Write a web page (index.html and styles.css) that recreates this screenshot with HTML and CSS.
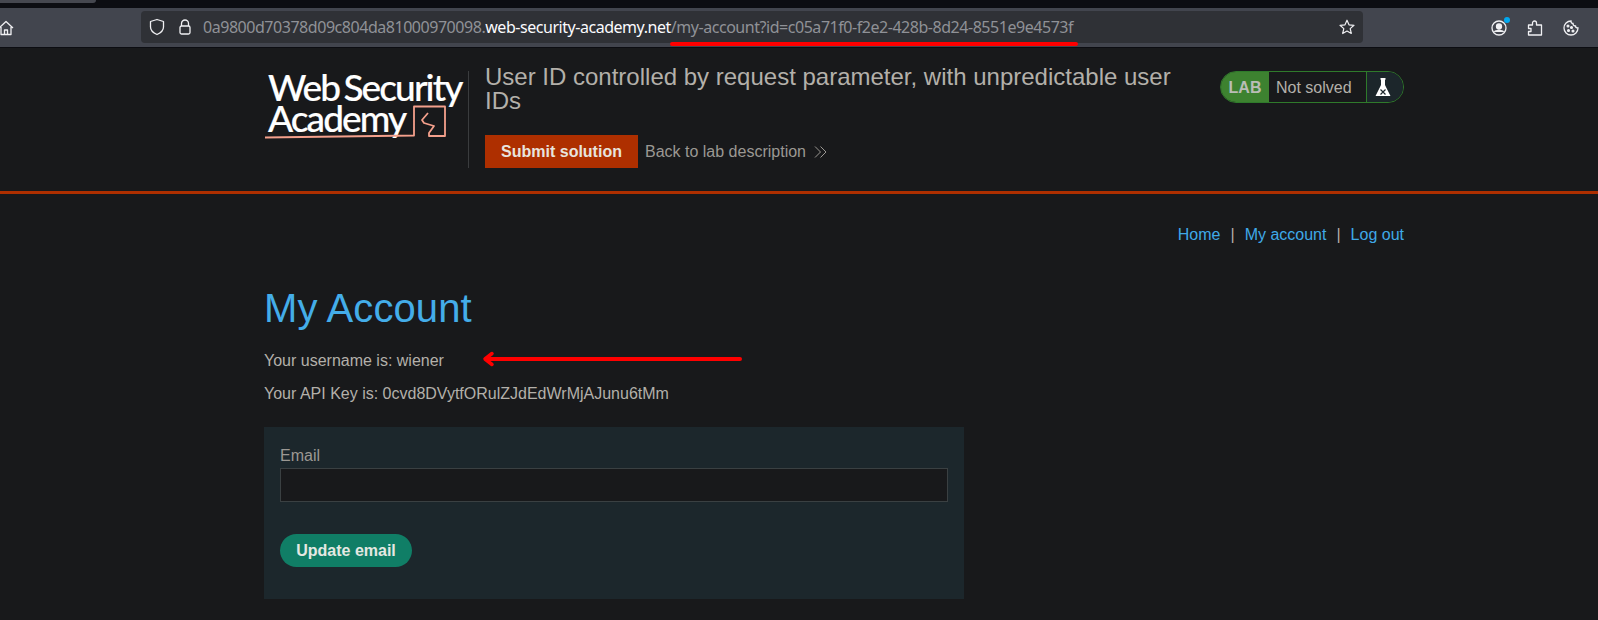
FILE: index.html
```html
<!DOCTYPE html>
<html lang="en">
<head>
<meta charset="utf-8">
<title>My Account</title>
<link rel="stylesheet" href="styles.css">
</head>
<body>
<div class="tabstrip"><div class="tab-end"></div></div>
<div class="toolbar">
  <svg class="home-icon" width="16" height="16" viewBox="0 0 16 16" fill="none" stroke="#f0f0f3" stroke-width="1.3"><path d="M-1 8 6 1.500 13 8M1 7v7.500h10V7M4.500 14.500V10h3v4.500" stroke-linejoin="round"/></svg>
  <div class="urlbar">
    <svg class="shield" width="16" height="18" viewBox="0 0 16 18" fill="none" stroke="#f0f0f3" stroke-width="1.300"><path d="M8 1.500 14.500 3.500V9c0 3.500-3 6-6.500 7.500C4.500 15 1.500 12.500 1.500 9V3.500Z" stroke-linejoin="round"/></svg>
    <svg class="lock" width="14" height="16" viewBox="0 0 14 16" fill="none" stroke="#f0f0f3" stroke-width="1.300"><path d="M3.500 7V4.500a3.500 3.500 0 0 1 7 0V7"/><rect x="2" y="7" width="10" height="8" rx="1.500"/></svg>
    <div class="url"><span class="url-dim">0a9800d70378d09c804da81000970098.</span><span class="url-host">web-security-academy.net</span><span class="url-dim">/my-account?id=c05a71f0-f2e2-428b-8d24-8551e9e4573f</span></div>
    <svg class="star" width="16" height="16" viewBox="0 0 16 16" fill="none" stroke="#f0f0f3" stroke-width="1.200"><path d="M8 1.200 10 5.800 15 6.300 11.200 9.600 12.300 14.500 8 12 3.700 14.500 4.800 9.600 1 6.300 6 5.800Z" stroke-linejoin="round"/></svg>
  </div>
  <div class="tools">
    <span class="tool-wrap">
      <svg width="16" height="16" viewBox="0 0 16 16" fill="none" stroke="#f0f0f3" stroke-width="1.300"><circle cx="8" cy="8" r="7"/><circle cx="8" cy="6.500" r="2.500" fill="#f0f0f3"/><path d="M3.500 12c1-2 8-2 9 0" fill="#f0f0f3"/></svg>
      <span class="notify-dot"></span>
    </span>
    <svg width="16" height="16" viewBox="0 0 16 16" fill="none" stroke="#f0f0f3" stroke-width="1.300"><path d="M1.500 5H5.500V3a2 2 0 0 1 4 0v2h5v10H1.500v-3.500H4V8.500H1.500Z" stroke-linejoin="round"/></svg>
    <svg width="16" height="16" viewBox="0 0 16 16" fill="none" stroke="#f0f0f3" stroke-width="1.300"><path d="M8 1a7 7 0 1 0 7 7c-1.500 0-2.500-1-2.500-2C11 6 10 5 10 3.500 9 3.500 8 2.500 8 1Z"/><circle cx="5" cy="6" r=".9" fill="#f0f0f3"/><circle cx="8.500" cy="7.500" r=".9" fill="#f0f0f3"/><circle cx="5.500" cy="10.500" r=".9" fill="#f0f0f3"/><circle cx="10" cy="11" r=".9" fill="#f0f0f3"/></svg>
  </div>
</div>
<div class="page">
  <header class="lab-header">
    <div class="header-inner">
      <div class="logo">
        <div class="logo-line">Web Security</div>
        <div class="logo-line">Academy</div>
        <svg class="logo-mark" width="186" height="40" viewBox="0 0 186 40" fill="none" stroke="#f4a08c" stroke-width="1.800" stroke-linejoin="round"><path d="M1 37.500 150 35.500V6.500H181V36H165V33L170 26 160 23 158 20 164 13"/></svg>
      </div>
      <div class="lab-info">
        <h2 class="lab-title">User ID controlled by request parameter, with unpredictable user IDs</h2>
        <div class="lab-actions">
          <button class="submit-btn">Submit solution</button>
          <a class="back-link">Back to lab description</a>
          <svg class="chevrons" width="13" height="14" viewBox="0 0 13 14" fill="none" stroke="#9b9893" stroke-width="1"><path d="M1 1.500 6.500 7 1 12.500M6.500 1.500 12 7 6.500 12.500"/></svg>
        </div>
      </div>
      <div class="status">
        <span class="status-lab">LAB</span>
        <span class="status-text">Not solved</span>
        <span class="status-icon"><svg width="16" height="20" viewBox="0 0 16 20"><path d="M5.500 1h5v1.500L10 3v5L15.500 19H.5L6 8V3L5.500 2.500Z" fill="#fff"/><path d="M5.500 12.500l5 5M10.500 12.500l-5 5" stroke="#1c262b" stroke-width="1.200"/></svg></span>
      </div>
    </div>
  </header>
  <main class="content">
    <nav class="top-links"><a>Home</a><span class="sep">|</span><a>My account</a><span class="sep">|</span><a>Log out</a></nav>
    <h1 class="title">My Account</h1>
    <p class="line">Your username is: wiener</p>
    <p class="line">Your API Key is: 0cvd8DVytfORulZJdEdWrMjAJunu6tMm</p>
    <form class="email-form">
      <label class="email-label">Email</label>
      <input class="email-input" type="email">
      <button class="update-btn" type="button">Update email</button>
    </form>
  </main>
</div>
<div class="url-mark"></div>
<svg class="arrow" width="262" height="16" viewBox="0 0 262 16" fill="none" stroke="#ff0000"><path d="M258 8H5" stroke-width="4" stroke-linecap="round"/><path d="M10 2.500 3 8 10 13.500" stroke-width="3.500" stroke-linecap="round" stroke-linejoin="round"/></svg>
</body>
</html>
```
FILE: styles.css
```css
* { box-sizing: border-box; }
html, body { margin: 0; padding: 0; height: 620px; overflow: hidden; }
body { background: #18191b; font-family: "Liberation Sans", Arial, sans-serif; color: #b3b0aa; position: relative; }

.tabstrip { height: 8px; background: #0c0d12; }
.tab-end { width: 96px; height: 3px; background: #45474f; border-radius: 0 0 3px 0; }

.toolbar { height: 40px; background: #42454e; border-bottom: 1px solid #0c0d12; display: flex; align-items: center; }
.home-icon { margin-right: 125px; flex: none; margin-top: 1px; }
.urlbar { width: 1222px; height: 32px; margin-top: -1px; background: #2f3136; border-radius: 4px; display: flex; align-items: center; padding: 0 8px; flex: none; }
.shield { flex: none; }
.lock { margin-left: 13px; flex: none; }
.url { margin-left: 11px; font: 16px "Noto Sans", sans-serif; white-space: nowrap; letter-spacing: -.46px; flex: 1; }
.url-dim { color: #8f9197; }
.url-host { color: #fbfbfe; }
.star { flex: none; }
.tools { display: flex; align-items: center; gap: 20px; margin-left: 128px; }
.tool-wrap { position: relative; display: flex; }
.notify-dot { position: absolute; top: -3px; right: -3px; width: 6px; height: 6px; border-radius: 50%; background: #00a8f0; }

.lab-header { height: 146px; border-bottom: 3px solid #ae2f00; }
.header-inner { width: 1140px; margin-left: 264px; padding-top: 23px; display: flex; align-items: flex-start; }
.logo { width: 205px; height: 97px; padding: 0 0 0 4px; border-right: 1px solid #3a3c3e; flex: none; position: relative; color: #fff; font: 500 37px/32px Lato, sans-serif; letter-spacing: -1.900px; word-spacing: -3px; white-space: nowrap; -webkit-text-stroke: .2px #fff; }
.logo-line { height: 31px; }
.logo-mark { position: absolute; left: 0; top: 29px; }

.lab-info { width: 702px; margin-left: 16px; flex: none; }
.lab-title { margin: -6px 0 0; font: 400 24px/24px "Liberation Sans", sans-serif; color: #b3b0aa; }
.lab-actions { display: flex; align-items: center; margin-top: 22px; }
.submit-btn { width: 153px; height: 33px; border: 0; background: #ae2f00; color: #e8e4de; font: 700 16px "Liberation Sans", sans-serif; padding: 0; }
.back-link { margin-left: 7px; font-size: 16px; color: #9b9893; }
.chevrons { margin-left: 8px; }

.status { margin-left: 33px; width: 184px; height: 32px; border: 1px solid #2f7a2b; border-radius: 16px; display: flex; align-items: stretch; overflow: hidden; flex: none; }
.status-lab { width: 48px; background: #3d8230; color: #b9bdb6; font: 700 16px/32px "Liberation Sans", sans-serif; text-align: center; }
.status-text { width: 98px; padding-left: 7px; font-size: 16px; line-height: 32px; color: #b3b0aa; border-right: 1px solid #2f7a2b; }
.status-icon { flex: 1; background: #1c262b; display: flex; align-items: center; justify-content: center; padding-right: 5px; }

.content { width: 1140px; margin-left: 264px; }
.top-links { display: flex; justify-content: flex-end; font-size: 16px; line-height: 18px; margin-top: 32px; color: #b3b0aa; }
.top-links a { color: #3fa9e8; }
.sep { margin: 0 10px; }
.title { margin: 41px 0 0; font: 400 40px/46px "Liberation Sans", sans-serif; letter-spacing: .1px; color: #44ade9; }
.line { margin: 21px 0 0; font-size: 16px; line-height: 18px; color: #b3b0aa; }
.line + .line { margin-top: 15px; }
.email-form { width: 700px; height: 172px; margin-top: 24px; background: #1c272c; padding: 20px 16px 0; }
.email-label { display: block; font-size: 16px; line-height: 18px; color: #9b9893; }
.email-input { display: block; width: 668px; height: 34px; margin-top: 3px; background: #18191b; border: 1px solid #3a4042; }
.update-btn { display: block; width: 132px; height: 33px; margin-top: 32px; border: 0; border-radius: 17px; background: #107e66; color: #e4e8e2; font: 700 16px "Liberation Sans", sans-serif; padding: 0; }

.url-mark { position: absolute; left: 670px; top: 42px; width: 408px; height: 4px; border-radius: 2px; background: #ff0000; }
.arrow { position: absolute; left: 482px; top: 351px; }
```
